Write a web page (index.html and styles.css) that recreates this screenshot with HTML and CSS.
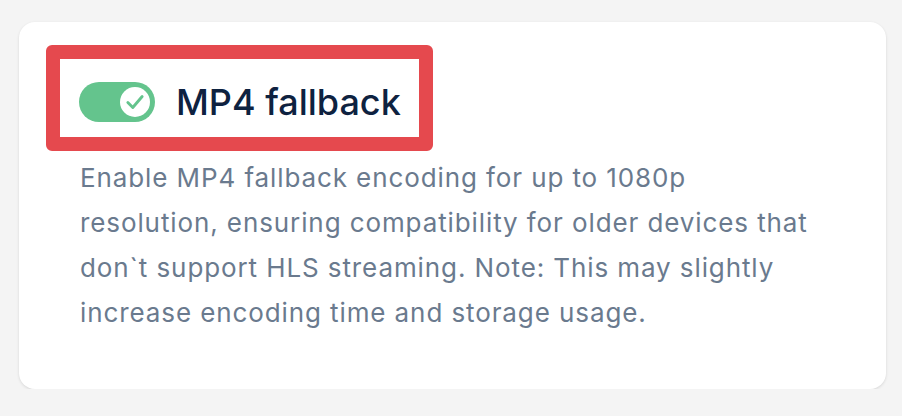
FILE: index.html
```html
<!DOCTYPE html>
<html lang="en">
<head>
  <meta charset="UTF-8" />
  <meta name="viewport" content="width=device-width, initial-scale=1.0" />
  <title>MP4 fallback</title>
  <link rel="stylesheet" href="styles.css">
</head>
<body>
  <div class="card">
    <div class="setting-head">
      <span class="toggle on">
        <span class="knob">
          <svg width="22" height="22" viewBox="0 0 20 20" fill="none">
            <path d="M3.5 10.5 L8 15 L16.5 5" stroke="#64c48d" stroke-width="2.6" stroke-linecap="round" stroke-linejoin="round"/>
          </svg>
        </span>
      </span>
      <h2 class="setting-title">MP4 fallback</h2>
    </div>
    <p class="setting-desc">
      Enable MP4 fallback encoding for up to 1080p<br>
      resolution, ensuring compatibility for older devices that<br>
      don`t support HLS streaming. Note: This may slightly<br>
      increase encoding time and storage usage.
    </p>
  </div>
</body>
</html>
```

FILE: styles.css
```css
body {
  margin: 0;
  background-color: #f4f4f4;
  font-family: Inter, "Noto Sans", sans-serif;
  padding: 22px 16px 0 19px;
}

.card {
  background: #fff;
  border-radius: 16px;
  box-shadow: 0 1px 3px rgba(0, 0, 0, 0.12);
  height: 367px;
  box-sizing: border-box;
  padding: 23px 27px;
}

.setting-head {
  display: inline-flex;
  align-items: center;
  gap: 21px;
  border: 14px solid #e5494e;
  border-radius: 6px;
  padding: 23px 18px 15px 19px;
}

.toggle {
  display: flex;
  align-items: center;
  justify-content: flex-end;
  width: 76px;
  height: 40px;
  border-radius: 20px;
  background: #64c48d;
  padding: 0 5px;
  box-sizing: border-box;
}

.knob {
  width: 30px;
  height: 30px;
  border-radius: 50%;
  background: #fff;
  display: flex;
  align-items: center;
  justify-content: center;
}

.setting-title {
  margin: 0;
  font-size: 36px;
  font-weight: 500;
  color: #0e2240;
  line-height: 40px;
}

.setting-desc {
  margin: 4px 0 0 34px;
  font-size: 26px;
  line-height: 45px;
  color: #6a7a8e;
  letter-spacing: 0.9px;
  white-space: nowrap;
}
```
